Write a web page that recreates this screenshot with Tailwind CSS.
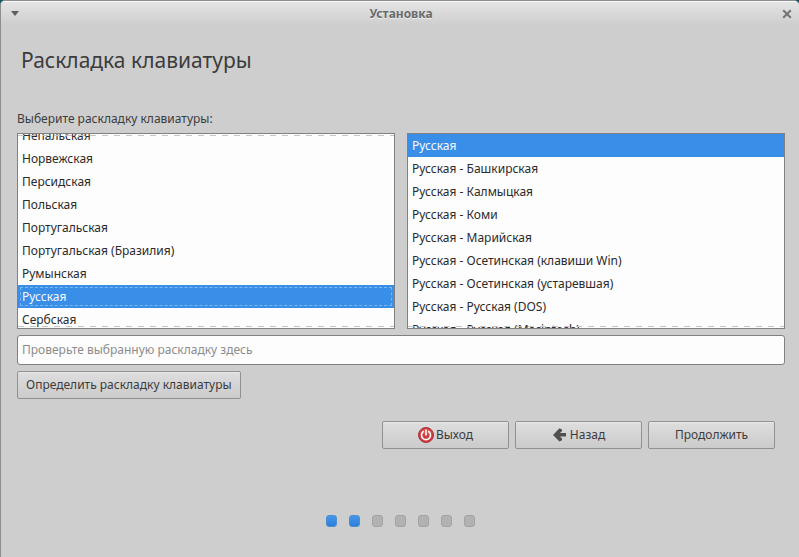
<!DOCTYPE html>
<html lang="ru">
<head>
    <meta charset="UTF-8">
    <meta name="viewport" content="width=device-width, initial-scale=1.0">
    <title>Установка</title>
    <script src="https://cdn.jsdelivr.net/npm/@tailwindcss/browser@4"></script>
</head>
<body class="min-h-screen flex bg-[#0f5560] font-['Noto_Sans',sans-serif] text-xs text-[#3c3c3c]">

    <div class="flex-1 min-w-0 flex flex-col bg-[#cecece] border-t border-l border-[#8f8d8f] rounded-t-[5px] overflow-hidden">

        <!-- Заголовок окна -->
        <header class="flex items-center justify-between h-6 pl-2 pr-1.5 bg-linear-to-b from-[#e4e4e4] to-[#cecece] border-t border-[#f8f8f8]">
            <button type="button" aria-label="Меню окна" class="w-3 h-3 flex items-center justify-center">
                <svg class="w-2 h-[5px]" viewBox="0 0 8 5" fill="#5f5f5f"><path d="M0 0h8L4 5z"/></svg>
            </button>
            <span class="font-bold text-[#6b6b6b] [text-shadow:0_1px_0_#eeeeee]">Установка</span>
            <button type="button" aria-label="Закрыть" class="w-3 h-3 flex items-center justify-center">
                <svg class="w-[10px] h-[10px]" viewBox="0 0 10 10" fill="none" stroke="#747474" stroke-width="2"><path d="M1.200 1.200l7.600 7.600M8.800 1.200l-7.600 7.600"/></svg>
            </button>
        </header>

        <main class="flex flex-col pl-4 pr-[14px]">
            <h1 class="mt-5 ml-1 text-[21px] leading-[30px]">Раскладка клавиатуры</h1>

            <p id="layout-label" class="mt-[34px] mb-1 leading-5">Выберите раскладку клавиатуры:</p>

            <div class="grid grid-cols-2 gap-3 text-[#2b2b2b]">
                <div class="relative h-49 bg-[#fdfdfd] border border-[#808080]">
                    <!-- Список прокручен: первая строка видна частично -->
                    <ul role="listbox" aria-labelledby="layout-label" tabindex="0" class="h-full overflow-hidden leading-[23px] outline-none">
                        <li role="option" class="-mt-2.5 h-[23px] px-1">Непальская</li>
                        <li role="option" class="h-[23px] px-1">Норвежская</li>
                        <li role="option" class="h-[23px] px-1">Персидская</li>
                        <li role="option" class="h-[23px] px-1">Польская</li>
                        <li role="option" class="h-[23px] px-1">Португальская</li>
                        <li role="option" class="h-[23px] px-1">Португальская (Бразилия)</li>
                        <li role="option" class="h-[23px] px-1">Румынская</li>
                        <li role="option" aria-selected="true" class="h-[23px] px-1 bg-[#398ee7] text-[#f4f9ff] outline-1 outline-dashed -outline-offset-3 outline-[#7db7f2]">Русская</li>
                        <li role="option" class="h-[23px] px-1">Сербская</li>
                    </ul>
                    <div class="absolute inset-x-0 top-px h-px bg-[repeating-linear-gradient(90deg,#c4c4c4_0_6px,transparent_6px_12px)]"></div>
                    <div class="absolute inset-x-0 bottom-px h-px bg-[repeating-linear-gradient(90deg,#c4c4c4_0_6px,transparent_6px_12px)]"></div>
                </div>
                <div class="relative h-49 bg-[#fdfdfd] border border-[#808080]">
                    <ul role="listbox" aria-label="Вариант раскладки" tabindex="0" class="h-full overflow-hidden leading-[23px] outline-none">
                        <li role="option" aria-selected="true" class="h-[23px] px-1 bg-[#398ee7] text-[#f4f9ff]">Русская</li>
                        <li role="option" class="h-[23px] px-1">Русская - Башкирская</li>
                        <li role="option" class="h-[23px] px-1">Русская - Калмыцкая</li>
                        <li role="option" class="h-[23px] px-1">Русская - Коми</li>
                        <li role="option" class="h-[23px] px-1">Русская - Марийская</li>
                        <li role="option" class="h-[23px] px-1">Русская - Осетинская (клавиши Win)</li>
                        <li role="option" class="h-[23px] px-1">Русская - Осетинская (устаревшая)</li>
                        <li role="option" class="h-[23px] px-1">Русская - Русская (DOS)</li>
                        <li role="option" class="h-[23px] px-1">Русская - Русская (Macintosh)</li>
                    </ul>
                    <div class="absolute inset-x-0 bottom-px h-px bg-[repeating-linear-gradient(90deg,#c4c4c4_0_6px,transparent_6px_12px)]"></div>
                </div>
            </div>

            <input type="text" aria-label="Проверка раскладки" placeholder="Проверьте выбранную раскладку здесь"
                class="mt-1.5 h-[30px] w-full px-1 pb-0.5 bg-[#fdfdfd] border border-[#808080] rounded-[3px] placeholder:text-[#8c8c8c] focus:outline-none">

            <button type="button" class="mt-1.5 self-start h-7 px-2 bg-linear-to-b from-[#dedede] to-[#cbcbcb] border border-[#919191] rounded-[2px] shadow-[inset_0_1px_0_#e8e8e8]">Определить раскладку клавиатуры</button>

            <!-- Навигация -->
            <div class="mt-[22px] mr-[10px] flex justify-end gap-1.5">
                <button type="button" class="w-[127px] h-7 flex items-center justify-center gap-0.5 bg-linear-to-b from-[#dedede] to-[#cbcbcb] border border-[#919191] rounded-[2px] shadow-[inset_0_1px_0_#e8e8e8]">
                    <svg class="w-4 h-4" viewBox="0 0 16 16" fill="none">
                        <circle cx="8" cy="8" r="7.500" fill="#d03a42" stroke="#a8333c"/>
                        <path d="M2 6a6.500 6.500 0 0 1 12 0q-6 3-12 0z" fill="#e0685f" opacity=".6"/>
                        <path d="M5.200 4.600a4.500 4.500 0 1 0 5.600 0M8 3v5" stroke="#fff" stroke-width="1.600" stroke-linecap="round"/>
                    </svg>
                    Выход
                </button>
                <button type="button" class="w-[127px] h-7 flex items-center justify-center gap-0.5 bg-linear-to-b from-[#dedede] to-[#cbcbcb] border border-[#919191] rounded-[2px] shadow-[inset_0_1px_0_#e8e8e8]">
                    <svg class="w-4 h-4" viewBox="0 0 16 16" fill="#505050"><path d="M1 8L7.500 1.200l2.500 1.300V4L8 6h6v3.600H8l2 2v1.700l-2.500 1.300z"/></svg>
                    Назад
                </button>
                <button type="button" class="w-[127px] h-7 bg-linear-to-b from-[#dedede] to-[#cbcbcb] border border-[#919191] rounded-[2px] shadow-[inset_0_1px_0_#e8e8e8]">Продолжить</button>
            </div>
        </main>

        <!-- Шаги установки -->
        <div class="mt-[66px] flex justify-center gap-3">
            <span class="w-[11px] h-3 rounded-[3px] bg-linear-to-b from-[#4597ea] to-[#2c7fd9] border border-[#4b8dd0]"></span>
            <span class="w-[11px] h-3 rounded-[3px] bg-linear-to-b from-[#4597ea] to-[#2c7fd9] border border-[#4b8dd0]"></span>
            <span class="w-[11px] h-3 rounded-[3px] bg-[#b2b2b2] border border-[#a3a3a3]"></span>
            <span class="w-[11px] h-3 rounded-[3px] bg-[#b2b2b2] border border-[#a3a3a3]"></span>
            <span class="w-[11px] h-3 rounded-[3px] bg-[#b2b2b2] border border-[#a3a3a3]"></span>
            <span class="w-[11px] h-3 rounded-[3px] bg-[#b2b2b2] border border-[#a3a3a3]"></span>
            <span class="w-[11px] h-3 rounded-[3px] bg-[#b2b2b2] border border-[#a3a3a3]"></span>
        </div>
    </div>
</body>
</html>
